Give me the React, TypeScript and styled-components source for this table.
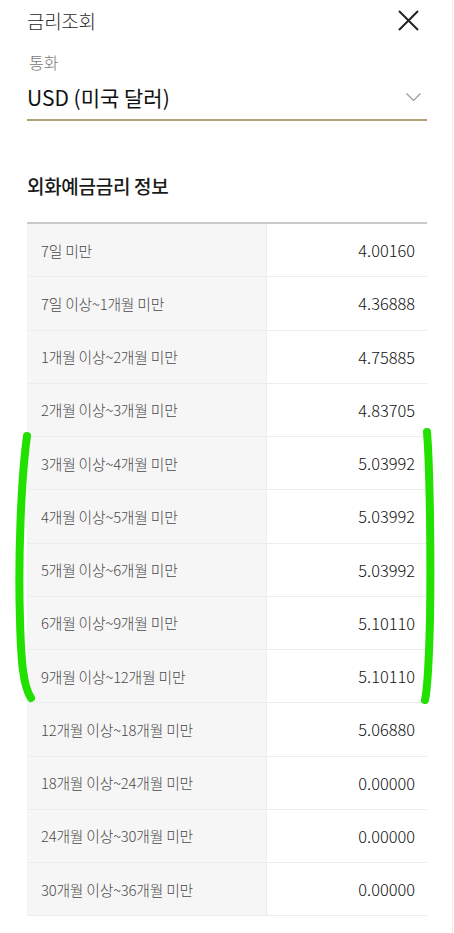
import React from "react";
import styled, { createGlobalStyle } from "styled-components";

const Global = createGlobalStyle`
  html, body { margin: 0; padding: 0; background: #ffffff; }
  body { font-family: "Noto Sans CJK KR", "Noto Sans", sans-serif; }
  * { box-sizing: border-box; }
`;

const Page = styled.div`
  position: relative;
  width: 453px;
  min-height: 933px;
  padding: 0 25px 0 27px;
  background: #fff;
  border-right: 1px solid #ededed;
`;

const Header = styled.header`
  display: flex;
  align-items: center;
  justify-content: space-between;
  height: 40px;
`;

const Title = styled.h1`
  margin: 0;
  font-size: 19px;
  font-weight: 300;
  color: #2a2a2a;
  letter-spacing: -0.3px;
`;

const CloseButton = styled.button`
  border: 0;
  background: none;
  padding: 0;
  margin-right: 8px;
  width: 21px;
  height: 21px;
  display: flex;
`;

const Field = styled.div`
  margin-top: 11px;
  display: flex;
  flex-direction: column;
`;

const FieldLabel = styled.label`
  font-size: 16px;
  font-weight: 300;
  color: #777;
  line-height: 22px;
  padding-left: 2px;
`;

const SelectBox = styled.div`
  display: flex;
  align-items: center;
  justify-content: space-between;
  height: 48px;
  padding-top: 2px;
  border-bottom: 2px solid #b3a07a;
`;

const SelectValue = styled.span`
  font-size: 21px;
  font-weight: 400;
  color: #111;
`;

const Chevron = styled.svg`
  margin-right: 6px;
`;

const SectionTitle = styled.h2`
  margin: 52px 0 0;
  font-size: 19px;
  font-weight: 500;
  color: #1a1a1a;
  line-height: 26px;
  letter-spacing: -0.3px;
`;

const Table = styled.div`
  margin-top: 23px;
  border-top: 2px solid #c8cacd;
`;

const Row = styled.div`
  display: grid;
  grid-template-columns: 240px 1fr;
  height: 53.25px;
  border-bottom: 1px solid #ececec;
`;

const Term = styled.div`
  display: flex;
  align-items: center;
  padding-left: 14px;
  background: #f6f6f6;
  border-right: 1px solid #ececec;
  font-size: 14.8px;
  font-weight: 300;
  color: #4a4a4a;
  letter-spacing: -0.2px;
`;

const Rate = styled.div`
  display: flex;
  align-items: center;
  justify-content: flex-end;
  padding-right: 12px;
  font-size: 16.4px;
  font-weight: 300;
  color: #111;
`;

const Overlay = styled.svg`
  position: absolute;
  top: 0;
  left: 0;
  pointer-events: none;
`;

const rows: [string, string][] = [
  ["7일 미만", "4.00160"],
  ["7일 이상~1개월 미만", "4.36888"],
  ["1개월 이상~2개월 미만", "4.75885"],
  ["2개월 이상~3개월 미만", "4.83705"],
  ["3개월 이상~4개월 미만", "5.03992"],
  ["4개월 이상~5개월 미만", "5.03992"],
  ["5개월 이상~6개월 미만", "5.03992"],
  ["6개월 이상~9개월 미만", "5.10110"],
  ["9개월 이상~12개월 미만", "5.10110"],
  ["12개월 이상~18개월 미만", "5.06880"],
  ["18개월 이상~24개월 미만", "0.00000"],
  ["24개월 이상~30개월 미만", "0.00000"],
  ["30개월 이상~36개월 미만", "0.00000"],
];

export default function App() {
  return (
    <>
      <Global />
      <Page>
        <Header>
          <Title>금리조회</Title>
          <CloseButton aria-label="닫기">
            <svg width="21" height="21" viewBox="0 0 21 21">
              <path d="M1 1 L20 20 M20 1 L1 20" stroke="#222" strokeWidth="2" fill="none" />
            </svg>
          </CloseButton>
        </Header>
        <Field>
          <FieldLabel>통화</FieldLabel>
          <SelectBox>
            <SelectValue>USD (미국 달러)</SelectValue>
            <Chevron width="15" height="8" viewBox="0 0 15 8">
              <path d="M0.5 0.5 L7.5 7.5 L14.5 0.5" stroke="#9a9a9a" strokeWidth="1.2" fill="none" />
            </Chevron>
          </SelectBox>
        </Field>
        <SectionTitle>외화예금금리 정보</SectionTitle>
        <Table>
          {rows.map(([t, r]) => (
            <Row key={t}>
              <Term>{t}</Term>
              <Rate>{r}</Rate>
            </Row>
          ))}
        </Table>
        <Overlay width="454" height="933" viewBox="0 0 454 933">
          <path
            d="M27 436 C21 480 18 560 20 620 C21 660 23 686 31 698"
            stroke="#22e000"
            strokeWidth="8"
            strokeLinecap="round"
            fill="none"
          />
          <path
            d="M427 432 C430 470 431 560 430 620 C429 660 428 686 425 700"
            stroke="#22e000"
            strokeWidth="8"
            strokeLinecap="round"
            fill="none"
          />
        </Overlay>
      </Page>
    </>
  );
}
